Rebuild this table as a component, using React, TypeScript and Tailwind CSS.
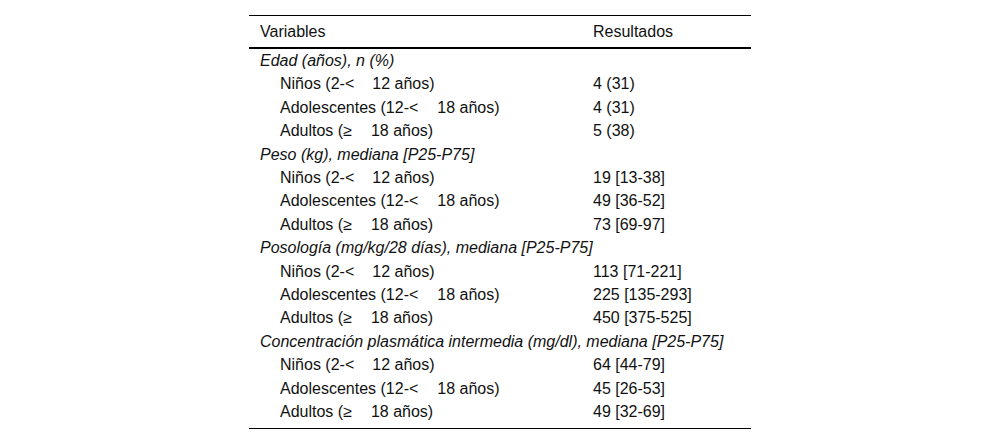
const font = { fontFamily: '"Liberation Sans", Arial, sans-serif' };

function Age({ kind }: { kind: "n" | "a" | "d" }) {
  if (kind === "n")
    return (
      <>
        Niños (2-&lt;<span className="inline-block w-[18px]" />12 años)
      </>
    );
  if (kind === "a")
    return (
      <>
        Adolescentes (12-&lt;<span className="inline-block w-[19px]" />18 años)
      </>
    );
  return (
    <>
      Adultos (≥<span className="inline-block w-[19px]" />18 años)
    </>
  );
}

const groups: { title: string; values: string[] }[] = [
  { title: "Edad (años), n (%)", values: ["4 (31)", "4 (31)", "5 (38)"] },
  {
    title: "Peso (kg), mediana [P25-P75]",
    values: ["19 [13-38]", "49 [36-52]", "73 [69-97]"],
  },
  {
    title: "Posología (mg/kg/28 días), mediana [P25-P75]",
    values: ["113 [71-221]", "225 [135-293]", "450 [375-525]"],
  },
  {
    title: "Concentración plasmática intermedia (mg/dl), mediana [P25-P75]",
    values: ["64 [44-79]", "45 [26-53]", "49 [32-69]"],
  },
];

const kinds: ("n" | "a" | "d")[] = ["n", "a", "d"];

export default function App() {
  return (
    <div className="w-[1000px] h-[444px] bg-white" style={font}>
      <div className="mx-auto w-[502px] pt-[15px] text-[16px] text-[#111]">
        {/* header */}
        <div className="grid grid-cols-[344px_1fr] border-t border-black border-b-2 pt-[1px] leading-[30px]">
          <div className="pl-[11px]">Variables</div>
          <div>Resultados</div>
        </div>

        {/* body */}
        <div className="pb-[4px] border-b border-black">
          {groups.map((g) => (
            <div key={g.title}>
              <div className="pl-[11px] italic leading-[23.4px] whitespace-nowrap">
                {g.title}
              </div>
              {g.values.map((v, i) => (
                <div
                  key={i}
                  className="grid grid-cols-[344px_1fr] leading-[23.4px]"
                >
                  <div className="pl-[31px] whitespace-nowrap">
                    <Age kind={kinds[i]} />
                  </div>
                  <div>{v}</div>
                </div>
              ))}
            </div>
          ))}
        </div>
      </div>
    </div>
  );
}
